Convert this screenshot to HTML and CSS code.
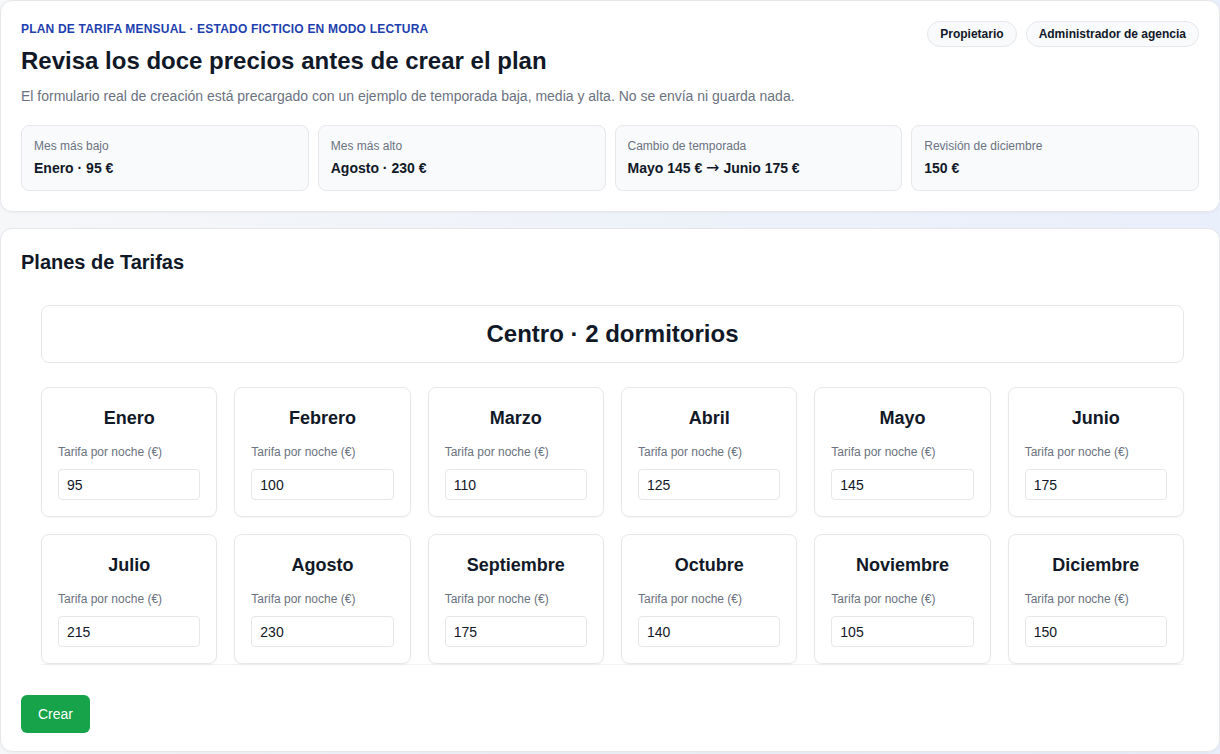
FILE: index.html
```html
<!DOCTYPE html>
<html lang="es">
<head>
<meta charset="utf-8">
<title>Planes de Tarifas</title>
<link rel="stylesheet" href="styles.css">
</head>
<body>
<div class="page">
  <section class="card intro">
    <div class="intro-head">
      <div class="intro-text">
        <p class="eyebrow">Plan de tarifa mensual · Estado ficticio en modo lectura</p>
        <h1 class="title">Revisa los doce precios antes de crear el plan</h1>
        <p class="desc">El formulario real de creación está precargado con un ejemplo de temporada baja, media y alta. No se envía ni guarda nada.</p>
      </div>
      <div class="chips">
        <span class="chip">Propietario</span>
        <span class="chip">Administrador de agencia</span>
      </div>
    </div>
    <div class="stats">
      <div class="stat"><div class="stat-label">Mes más bajo</div><div class="stat-value">Enero · 95 €</div></div>
      <div class="stat"><div class="stat-label">Mes más alto</div><div class="stat-value">Agosto · 230 €</div></div>
      <div class="stat"><div class="stat-label">Cambio de temporada</div><div class="stat-value">Mayo 145 € <span class="arrow">→</span> Junio 175 €</div></div>
      <div class="stat"><div class="stat-label">Revisión de diciembre</div><div class="stat-value">150 €</div></div>
    </div>
  </section>

  <section class="card plans">
    <h2 class="plans-title">Planes de Tarifas</h2>
    <div class="plan-wrap">
      <div class="property"><h3>Centro · 2 dormitorios</h3></div>
      <div class="months">
        <div class="month"><h4>Enero</h4><label>Tarifa por noche (€)</label><input type="text" value="95"></div>
        <div class="month"><h4>Febrero</h4><label>Tarifa por noche (€)</label><input type="text" value="100"></div>
        <div class="month"><h4>Marzo</h4><label>Tarifa por noche (€)</label><input type="text" value="110"></div>
        <div class="month"><h4>Abril</h4><label>Tarifa por noche (€)</label><input type="text" value="125"></div>
        <div class="month"><h4>Mayo</h4><label>Tarifa por noche (€)</label><input type="text" value="145"></div>
        <div class="month"><h4>Junio</h4><label>Tarifa por noche (€)</label><input type="text" value="175"></div>
        <div class="month"><h4>Julio</h4><label>Tarifa por noche (€)</label><input type="text" value="215"></div>
        <div class="month"><h4>Agosto</h4><label>Tarifa por noche (€)</label><input type="text" value="230"></div>
        <div class="month"><h4>Septiembre</h4><label>Tarifa por noche (€)</label><input type="text" value="175"></div>
        <div class="month"><h4>Octubre</h4><label>Tarifa por noche (€)</label><input type="text" value="140"></div>
        <div class="month"><h4>Noviembre</h4><label>Tarifa por noche (€)</label><input type="text" value="105"></div>
        <div class="month"><h4>Diciembre</h4><label>Tarifa por noche (€)</label><input type="text" value="150"></div>
      </div>
    </div>
    <button class="btn-create" type="button">Crear</button>
  </section>
</div>
</body>
</html>
```

FILE: styles.css
```css
* { box-sizing: border-box; }
html, body { margin: 0; padding: 0; }
body {
  font-family: "Liberation Sans", Arial, sans-serif;
  color: #111827;
  background: linear-gradient(90deg, #f6f7f9 0%, #eef2f9 50%, #e9effb 100%);
  min-height: 754px;
}
.page {
  display: flex;
  flex-direction: column;
  gap: 16px;
}
.card {
  background: #ffffff;
  border: 1px solid #e5e7eb;
  border-radius: 12px;
  padding: 20px;
  box-shadow: 0 1px 3px rgba(17, 24, 39, 0.04);
}
.intro-head {
  display: flex;
  justify-content: space-between;
  align-items: flex-start;
}
.eyebrow {
  margin: 0;
  font-size: 12px;
  line-height: 16px;
  font-weight: 700;
  text-transform: uppercase;
  letter-spacing: 0.2px;
  color: #1e40af;
}
.title {
  margin: 8px 0 0;
  font-size: 24px;
  line-height: 32px;
  font-weight: 700;
  color: #111827;
}
.desc {
  margin: 8px 0 0;
  font-size: 14px;
  line-height: 22px;
  color: #6b7280;
}
.chips {
  display: flex;
  gap: 9px;
}
.chip {
  display: inline-block;
  font-size: 12px;
  line-height: 16px;
  font-weight: 700;
  color: #111827;
  background: #f8fafc;
  border: 1px solid #e5e7eb;
  border-radius: 999px;
  padding: 4px 12px;
}
.stats {
  margin-top: 18px;
  display: grid;
  grid-template-columns: repeat(4, 1fr);
  gap: 9px;
}
.stat {
  background: #f8fafc;
  border: 1px solid #e5e7eb;
  border-radius: 8px;
  padding: 12px 12px 12px;
  height: 66px;
}
.stat-label {
  font-size: 12px;
  line-height: 16px;
  color: #6b7280;
}
.stat-value {
  margin-top: 4px;
  font-size: 14px;
  line-height: 20px;
  font-weight: 700;
  color: #111827;
}
.arrow {
  font-family: "DejaVu Sans", sans-serif;
  font-weight: 400;
  font-size: 16px;
  line-height: 1;
}
.plans { padding-bottom: 18px; }
.plans-title {
  margin: 0;
  font-size: 20px;
  line-height: 26px;
  font-weight: 700;
}
.plan-wrap {
  margin-top: 10px;
  padding: 20px 15px 0 20px;
}
.property {
  border: 1px solid #e5e7eb;
  border-radius: 8px;
  padding: 14px;
  text-align: center;
}
.property h3 {
  margin: 0;
  font-size: 24px;
  line-height: 28px;
  font-weight: 700;
}
.months {
  margin-top: 24px;
  display: grid;
  grid-template-columns: repeat(6, 1fr);
  gap: 17px;
  border-bottom: 1px solid #f1f3f5;
}
.month {
  border: 1px solid #e5e7eb;
  border-radius: 8px;
  padding: 16px 16px 16px;
  display: flex;
  flex-direction: column;
  box-shadow: 0 1px 2px rgba(17, 24, 39, 0.04);
}
.month h4 {
  margin: 0;
  text-align: center;
  font-size: 18px;
  line-height: 28px;
  font-weight: 700;
  color: #111827;
}
.month label {
  margin-top: 11px;
  font-size: 12px;
  line-height: 18px;
  color: #6b7280;
}
.month input {
  margin-top: 8px;
  width: 100%;
  height: 31px;
  border: 1px solid #e5e7eb;
  border-radius: 4px;
  padding: 0 8px;
  font-family: "Liberation Sans", Arial, sans-serif;
  font-size: 14px;
  color: #111827;
  background: #ffffff;
  outline: none;
}
.btn-create {
  margin-top: 30px;
  height: 38px;
  padding: 0 17px;
  border: none;
  border-radius: 6px;
  background: #16a34a;
  color: #ffffff;
  font-family: "Liberation Sans", Arial, sans-serif;
  font-size: 14px;
  cursor: pointer;
}
```
